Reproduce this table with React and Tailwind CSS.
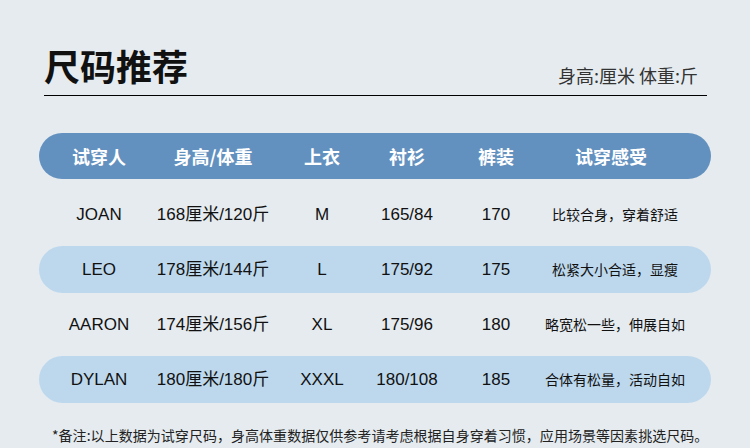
// App.jsx

const cols = "grid grid-cols-[120px_108px_110px_60px_118px_120px] items-center";

const rows = [
  { name: "JOAN", body: "168厘米/120斤", top: "M", shirt: "165/84", pants: "170", feel: "比较合身，穿着舒适" },
  { name: "LEO", body: "178厘米/144斤", top: "L", shirt: "175/92", pants: "175", feel: "松紧大小合适，显瘦" },
  { name: "AARON", body: "174厘米/156斤", top: "XL", shirt: "175/96", pants: "180", feel: "略宽松一些，伸展自如" },
  { name: "DYLAN", body: "180厘米/180斤", top: "XXXL", shirt: "180/108", pants: "185", feel: "合体有松量，活动自如" },
];

function Cell({ children, className = "" }) {
  return (
    <div className={`flex justify-center whitespace-nowrap ${className}`}>
      {children}
    </div>
  );
}

export default function App() {
  return (
    <div
      className="w-[750px] h-[448px] overflow-hidden bg-[#e5ebef] text-[#111]"
      style={{ fontFamily: '"Liberation Sans", "Noto Sans CJK SC", sans-serif' }}
    >
      {/* title */}
      <div className="ml-[44px] mr-[43px] pt-[45px] flex items-end justify-between border-b border-black pb-[10px]">
        <h1 className="text-[36px] leading-[40px] font-semibold text-[#111] font-['Noto_Sans_CJK_SC',sans-serif]">
          尺码推荐
        </h1>
        <span className="mr-[9px] mb-[-2px] text-[18px] leading-[24px] text-[#333] font-['Noto_Sans_CJK_SC',sans-serif]">
          身高:厘米 体重:斤
        </span>
      </div>

      {/* table */}
      <div className="mx-[39px] mt-[37px] w-[672px]">
        <div className={`${cols} h-[46px] rounded-full bg-[#6391bf] text-white text-[18px] font-bold font-['Noto_Sans_CJK_SC',sans-serif]`}>
          <Cell>试穿人</Cell>
          <Cell>身高/体重</Cell>
          <Cell>上衣</Cell>
          <Cell>衬衫</Cell>
          <Cell>裤装</Cell>
          <Cell className="mr-[8px]">试穿感受</Cell>
        </div>

        <div className="mt-[12px] flex flex-col gap-[8px]">
          {rows.map((r, i) => (
            <div
              key={r.name}
              className={`${cols} h-[47px] rounded-full text-[17px] ${i % 2 === 1 ? "bg-[#bdd8ed]" : ""}`}
            >
              <Cell>{r.name}</Cell>
              <Cell>{r.body}</Cell>
              <Cell>{r.top}</Cell>
              <Cell>{r.shirt}</Cell>
              <Cell>{r.pants}</Cell>
              <Cell className="text-[14px] font-['Noto_Sans_CJK_SC',sans-serif]">{r.feel}</Cell>
            </div>
          ))}
        </div>
      </div>

      {/* note */}
      <p className="mt-[22px] ml-[52px] whitespace-nowrap text-[14px] tracking-[0.04px] leading-[20px] text-[#222] font-['Noto_Sans_CJK_SC',sans-serif]">
        *备注:以上数据为试穿尺码，身高体重数据仅供参考请考虑根据自身穿着习惯，应用场景等因素挑选尺码。
      </p>
    </div>
  );
}
